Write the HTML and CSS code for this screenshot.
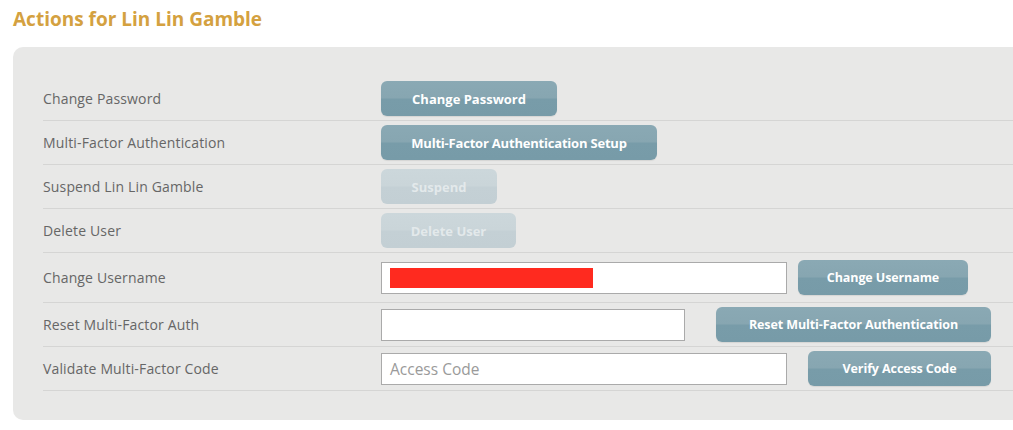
FILE: index.html
```html
<!DOCTYPE html>
<html>
<head>
<meta charset="utf-8">
<link rel="stylesheet" href="styles.css">
</head>
<body>
<h1 class="title">Actions for Lin Lin Gamble</h1>
<div class="panel">
  <div class="row">
    <div class="label">Change Password</div>
    <div class="controls"><button class="btn w-pass">Change Password</button></div>
  </div>
  <div class="row">
    <div class="label">Multi-Factor Authentication</div>
    <div class="controls"><button class="btn w-mfa">Multi-Factor Authentication Setup</button></div>
  </div>
  <div class="row">
    <div class="label">Suspend Lin Lin Gamble</div>
    <div class="controls"><button class="btn disabled w-suspend">Suspend</button></div>
  </div>
  <div class="row">
    <div class="label">Delete User</div>
    <div class="controls"><button class="btn disabled w-delete">Delete User</button></div>
  </div>
  <div class="row tall">
    <div class="label">Change Username</div>
    <div class="controls gap11">
      <div class="input wide"><span class="redact"></span></div>
      <button class="btn small w-username">Change Username</button>
    </div>
  </div>
  <div class="row">
    <div class="label">Reset Multi-Factor Auth</div>
    <div class="controls gap31">
      <div class="input narrow"></div>
      <button class="btn small w-reset">Reset Multi-Factor Authentication</button>
    </div>
  </div>
  <div class="row">
    <div class="label">Validate Multi-Factor Code</div>
    <div class="controls gap21">
      <div class="input wide"><span class="placeholder">Access Code</span></div>
      <button class="btn small w-verify">Verify Access Code</button>
    </div>
  </div>
</div>
</body>
</html>
```
FILE: styles.css
```css
html, body {
  margin: 0;
  padding: 0;
  background: #ffffff;
  overflow: hidden;
}
body {
  width: 1013px;
  height: 430px;
  font-family: "Open Sans", "Liberation Sans", sans-serif;
}
.title {
  margin: 0;
  padding: 6px 0 0 13px;
  height: 47px;
  box-sizing: border-box;
  font-size: 19px;
  font-weight: 700;
  color: #d4a140;
  line-height: 26px;
}
.panel {
  margin-left: 13px;
  width: 1040px;
  background: #e8e8e7;
  border-radius: 10px;
  padding: 30px 0 29px 30px;
  box-sizing: border-box;
}
.row {
  display: flex;
  align-items: center;
  height: 44px;
  border-bottom: 1px solid #d5d5d4;
  box-sizing: border-box;
}
.row.tall {
  height: 50px;
}
.label {
  width: 338px;
  flex: none;
  font-size: 14px;
  color: #666666;
  letter-spacing: 0.15px;
}
.controls {
  display: flex;
  align-items: center;
}
.gap11 { gap: 11px; }
.gap21 { gap: 21px; }
.gap31 { gap: 31px; }
.btn {
  height: 35px;
  padding: 0;
  text-align: center;
  border: none;
  border-radius: 6px;
  background: linear-gradient(to bottom, #8aa9b4 0%, #87a6b1 48%, #789ca9 52%, #779ba8 100%);
  color: #ffffff;
  font-family: "Open Sans", "Liberation Sans", sans-serif;
  font-weight: 700;
  font-size: 13px;
  white-space: nowrap;
  box-shadow: 0 1px 1px rgba(0,0,0,0.08);
}
.btn.small {
  font-size: 12.5px;
  letter-spacing: -0.1px;
}
.w-pass { width: 176px; }
.w-mfa { width: 276px; letter-spacing: -0.2px; }
.w-suspend { width: 116px; }
.w-delete { width: 135px; }
.w-username { width: 170px; }
.w-reset { width: 275px; }
.w-verify { width: 183px; }
.btn.disabled {
  background: linear-gradient(to bottom, #ccd7db 0%, #cad5d9 48%, #c4d0d5 52%, #c3cfd4 100%);
  color: #e3e9eb;
  box-shadow: none;
}
.input {
  height: 32px;
  box-sizing: border-box;
  border: 1px solid #aaaaaa;
  background: #ffffff;
  display: flex;
  align-items: center;
  padding-left: 8px;
}
.input.wide { width: 406px; }
.input.narrow { width: 304px; }
.redact {
  display: block;
  width: 203px;
  height: 20px;
  background: #ff2a1f;
}
.placeholder {
  color: #9a9a9a;
  font-size: 15.5px;
}
```
